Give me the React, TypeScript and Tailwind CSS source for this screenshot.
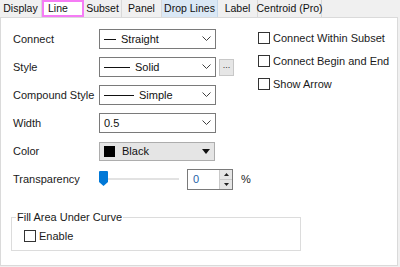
import React from 'react';

const font = { fontFamily: '"Segoe UI", "Liberation Sans", Arial, sans-serif' };

const tabs = ['Display', 'Line', 'Subset', 'Panel', 'Drop Lines', 'Label', 'Centroid (Pro)'];
const tabWidths: Record<string, string> = {
  Display: 'w-[42px]',
  Line: 'w-[42px]',
  Subset: 'w-[38px]',
  Panel: 'w-[40px]',
  'Drop Lines': 'w-[56px]',
  Label: 'w-[40px]',
  'Centroid (Pro)': 'w-[64px]',
};

const Chevron = () => (
  <svg width="9" height="6" viewBox="0 0 9 6" className="ml-auto mr-[4px]">
    <path d="M0.5 0.5 L4.5 4.5 L8.5 0.5" fill="none" stroke="#404040" strokeWidth="1" />
  </svg>
);

const Checkbox = ({ label }: { label: string }) => (
  <div className="flex items-center h-[12px]">
    <div className="w-[12px] h-[12px] border border-[#333] bg-white shrink-0" />
    <span className="ml-[3px] text-[11px] text-[#1a1a1a] leading-none whitespace-nowrap">{label}</span>
  </div>
);

const Dropdown = ({ line, text }: { line?: number; text: string }) => (
  <div className="w-[117px] h-[20px] border border-[#7a7a7a] bg-white flex items-center pl-[4px]">
    {line ? <div className="h-px bg-[#111] shrink-0" style={{ width: line }} /> : null}
    <span className={`text-[11px] text-[#111] ${line ? 'ml-[5px]' : ''}`}>{text}</span>
    <Chevron />
  </div>
);

const Row = ({ label, children }: { label: string; children: React.ReactNode }) => (
  <div className="flex items-center h-[28px]">
    <div className="w-[86px] text-[11px] text-[#1a1a1a] whitespace-nowrap">{label}</div>
    {children}
  </div>
);

export default function App() {
  return (
    <div className="w-[400px] h-[267px] bg-[#f0f0f0] overflow-hidden" style={font}>
      <div className="flex h-[17px]">
        {tabs.map((t) => {
          const active = t === 'Line';
          const hover = t === 'Drop Lines';
          return (
            <div
              key={t}
              className={`${tabWidths[t]} h-[17px] flex items-center whitespace-nowrap text-[10.5px] text-[#111] ${
                active
                  ? 'border-2 border-[#f57cf5] bg-white justify-start pl-[4px]'
                  : hover
                  ? 'justify-center border-r border-[#c6d8ea] bg-[#dae8f5]'
                  : 'justify-center border-r border-[#d9d9d9] bg-[#f0f0f0]'
              }`}
            >
              {t}
            </div>
          );
        })}
      </div>
      <div className="w-[398px] h-[249px] border border-[#dadada] bg-white">
        <div className="flex">
          <div className="flex flex-col pl-[12px] pt-[7px] w-[256px]">
            <Row label="Connect">
              <Dropdown line={12} text="Straight" />
            </Row>
            <Row label="Style">
              <Dropdown line={26} text="Solid" />
              <div className="ml-[3px] w-[15px] h-[17px] border border-[#c8c8c8] bg-[#e6e6e6] flex items-center justify-center text-[9px] leading-none text-[#333] pb-[4px]">
                ...
              </div>
            </Row>
            <Row label="Compound Style">
              <Dropdown line={30} text="Simple" />
            </Row>
            <Row label="Width">
              <Dropdown text="0.5" />
            </Row>
            <Row label="Color">
              <div className="w-[116px] h-[19px] border border-[#adadad] bg-[#e5e5e5] flex items-center pl-[4px]">
                <div className="w-[11px] h-[11px] bg-black" />
                <span className="ml-[7px] text-[11px] text-[#111]">Black</span>
                <svg width="8" height="5" viewBox="0 0 8 5" className="ml-auto mr-[4px]">
                  <path d="M0 0 L8 0 L4 5 Z" fill="#111" />
                </svg>
              </div>
            </Row>
            <Row label="Transparency">
              <div className="relative w-[80px] h-[16px] flex items-center">
                <div className="w-full h-[2px] bg-[#e2e2e2]" />
                <svg width="9" height="15" viewBox="0 0 9 15" className="absolute left-0 top-0">
                  <path d="M0 1 Q0 0 1 0 L8 0 Q9 0 9 1 L9 11 L4.5 15 L0 11 Z" fill="#0078d7" />
                </svg>
              </div>
              <div className="ml-[8px] flex h-[21px] w-[46px] border border-[#7a7a7a]">
                <div className="flex-1 text-[11px] text-[#1f5fa8] pl-[5px] flex items-center">0</div>
                <div className="w-[13px] flex flex-col border-l border-[#c9c9c9]">
                  <div className="flex-1 bg-[#e6e6e6] border-b border-[#c9c9c9] flex items-center justify-center">
                    <svg width="5" height="3" viewBox="0 0 5 3"><path d="M0 3 L5 3 L2.5 0 Z" fill="#222" /></svg>
                  </div>
                  <div className="flex-1 bg-[#e6e6e6] flex items-center justify-center">
                    <svg width="5" height="3" viewBox="0 0 5 3"><path d="M0 0 L5 0 L2.5 3 Z" fill="#222" /></svg>
                  </div>
                </div>
              </div>
              <span className="ml-[8px] text-[11px] text-[#1a1a1a]">%</span>
            </Row>
          </div>
          <div className="flex flex-col gap-[11px] pt-[14px] pl-[1px]">
            <Checkbox label="Connect Within Subset" />
            <Checkbox label="Connect Begin and End" />
            <Checkbox label="Show Arrow" />
          </div>
        </div>
        <div className="relative ml-[10px] mt-[24px] w-[290px] h-[34px] border border-[#dcdcdc]">
          <span className="absolute left-[4px] top-[-8px] bg-white px-[1px] text-[11px] leading-[14px] text-[#1a1a1a] whitespace-nowrap">
            Fill Area Under Curve
          </span>
          <div className="pl-[12px] pt-[12px]">
            <Checkbox label="Enable" />
          </div>
        </div>
      </div>
    </div>
  );
}
